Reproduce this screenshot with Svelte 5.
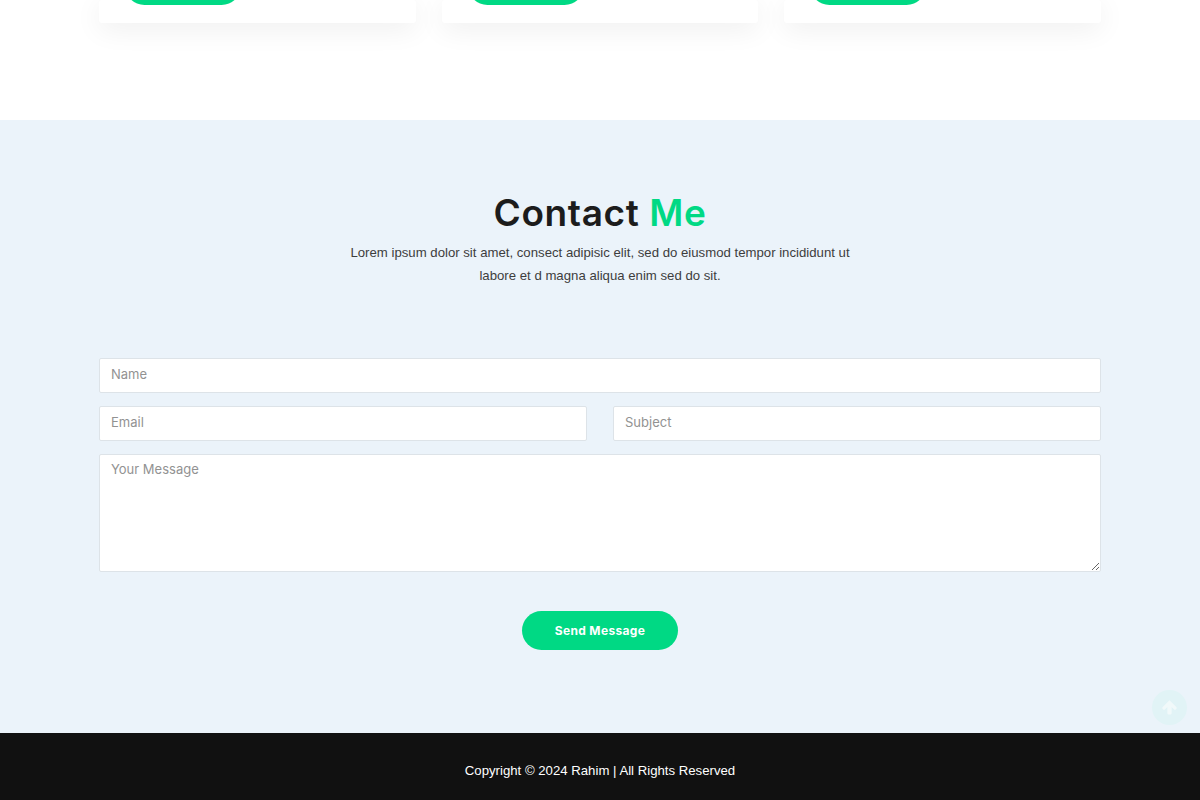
<div class="page">
  <section class="services">
    <div class="cards">
      {#each [0, 1, 2] as card (card)}
        <article class="card"><a class="card-btn" href="#top" aria-label="Read more"></a></article>
      {/each}
    </div>
  </section>

  <section class="contact">
    <h2>Contact <span>Me</span></h2>
    <p>Lorem ipsum dolor sit amet, consect adipisic elit, sed do eiusmod tempor incididunt ut<br />labore et d magna aliqua enim sed do sit.</p>
    <form>
      <input type="text" placeholder="Name" />
      <div class="row">
        <input type="email" placeholder="Email" />
        <input type="text" placeholder="Subject" />
      </div>
      <textarea placeholder="Your Message"></textarea>
      <button type="button">Send Message</button>
    </form>
  </section>

  <footer>Copyright © 2024 Rahim | All Rights Reserved</footer>

  <a class="to-top" href="#top" aria-label="Back to top">
    <svg viewBox="0 0 20 20" width="17" height="17" aria-hidden="true">
      <path d="M10 1.500 18.200 9.700a1.300 1.300 0 0 1 0 1.800l-.9.9a1.300 1.300 0 0 1-1.800 0l-3-3v7.600a1.300 1.300 0 0 1-1.300 1.300H8.800a1.300 1.300 0 0 1-1.300-1.300V9.400l-3 3a1.300 1.300 0 0 1-1.800 0l-.9-.9a1.300 1.300 0 0 1 0-1.800Z" fill="#fff" />
    </svg>
  </a>
</div>

<style>
  :global(body) {
    margin: 0;
    background: #fff;
  }
  .page {
    position: relative;
    height: 800px;
    overflow: hidden;
    font-family: "Liberation Sans", Arial, sans-serif;
  }
  .services {
    height: 120px;
    padding: 0 99px;
    box-sizing: border-box;
  }
  .cards {
    display: grid;
    grid-template-columns: repeat(3, 1fr);
    gap: 26px;
  }
  .card {
    height: 23px;
    padding: 0 26px;
    background: #fff;
    border-radius: 3px;
    box-shadow: 0 6px 28px rgba(0, 0, 0, 0.07);
  }
  .card-btn {
    display: block;
    width: 116px;
    height: 39px;
    margin-top: -34px;
    border-radius: 20px;
    background: #00d984;
  }
  .contact {
    height: 613px;
    box-sizing: border-box;
    padding: 69px 99px 0;
    background: #ebf3fa;
    text-align: center;
  }
  h2 {
    margin: 0;
    font-family: Inter, sans-serif;
    font-size: 37px;
    font-weight: 600;
    letter-spacing: 0.6px;
    line-height: 48px;
    color: #1c1c1c;
  }
  h2 span {
    color: #00d984;
  }
  p {
    margin: 4px 0 0;
    font-size: 13.2px;
    line-height: 23px;
    color: #3d3d3d;
  }
  form {
    display: flex;
    flex-direction: column;
    margin-top: 71px;
  }
  input,
  textarea {
    display: block;
    box-sizing: border-box;
    width: 100%;
    margin: 0;
    padding: 0 11px;
    background: #fff;
    border: 1px solid #dde3e8;
    border-radius: 2px;
    font-family: Inter, sans-serif;
    font-size: 13px;
    color: #333;
    outline: none;
  }
  input {
    height: 35px;
    padding-bottom: 3px;
  }
  input::placeholder,
  textarea::placeholder {
    color: #929292;
    opacity: 1;
  }
  .row {
    display: grid;
    grid-template-columns: 1fr 1fr;
    gap: 26px;
    margin-top: 13px;
  }
  textarea {
    height: 118px;
    margin-top: 13px;
    padding-top: 5px;
    line-height: 18px;
  }
  button {
    align-self: center;
    width: 156px;
    height: 39px;
    margin-top: 39px;
    padding: 0;
    background: #00d984;
    border: 0;
    border-radius: 20px;
    font-family: Inter, sans-serif;
    font-size: 12px;
    font-weight: 700;
    letter-spacing: 0.35px;
    color: #fff;
  }
  footer {
    height: 67px;
    background: #111;
    color: #fff;
    font-size: 13.2px;
    line-height: 76px;
    text-align: center;
  }
  .to-top {
    position: absolute;
    right: 13px;
    bottom: 75px;
    display: flex;
    align-items: center;
    justify-content: center;
    width: 35px;
    height: 35px;
    border-radius: 50%;
    background: #e1f3f6;
  }
  .to-top svg {
    opacity: 0.55;
  }
</style>
